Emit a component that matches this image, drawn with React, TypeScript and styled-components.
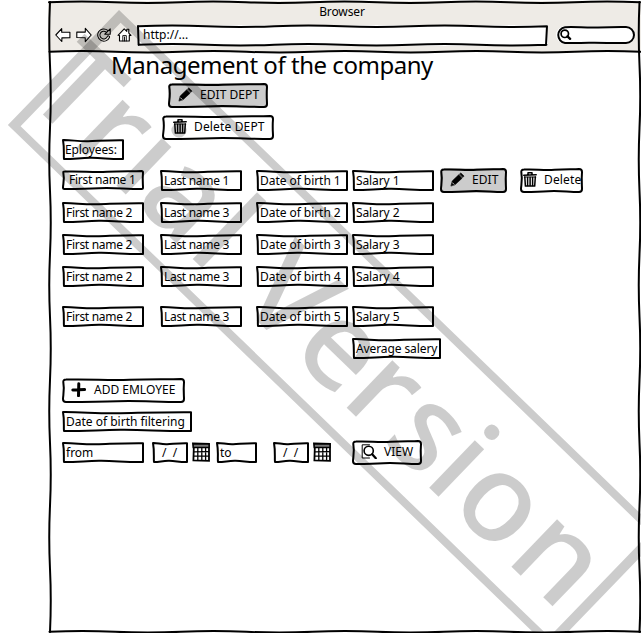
import React from "react";
import styled, { createGlobalStyle } from "styled-components";

const GlobalStyle = createGlobalStyle`
  *, *::before, *::after { box-sizing: border-box; }
  html, body { margin: 0; background: #fff; overflow: hidden; }
  body { font-family: "Noto Sans", "Open Sans", sans-serif; font-size: 12px; color: #000; }
  button { border: 0; padding: 0; font: inherit; color: inherit; text-align: left; }
`;

const Page = styled.div`
  position: relative;
  width: 641px;
  height: 633px;
  overflow: hidden;
  padding: 1px 0 0 48px;
`;

const Browser = styled.main`
  position: relative;
  width: 593px;
  height: 632px;
`;

const Outline = styled.svg`
  position: absolute;
  inset: 0;
  width: 100%;
  height: 100%;
  overflow: visible;
  pointer-events: none;
  fill: none;
  stroke: #000;
  stroke-width: 2;
  stroke-linejoin: round;
  stroke-linecap: round;
`;

const Chrome = styled.header`
  position: relative;
  height: 51px;
  padding: 1px 6px 0 7px;
  background: #eeebe6;
`;

const WindowTitle = styled.div`
  height: 20px;
  line-height: 20px;
  text-align: center;
  letter-spacing: -0.1px;
  padding-right: 6px;
`;

const Toolbar = styled.div`
  display: flex;
  align-items: center;
  height: 26px;
`;

const NavIcon = styled.svg<{ $gap: number }>`
  flex: none;
  margin-right: ${(p) => p.$gap}px;
  fill: none;
  stroke: #000;
  stroke-width: 1.1;
  stroke-linejoin: round;
  stroke-linecap: round;
`;

const Sheet = styled.section`
  display: flex;
  flex-direction: column;
  padding-left: 14px;
`;

const Heading = styled.h1`
  height: 31px;
  margin: 0 0 0 49px;
  font-size: 24px;
  font-weight: 400;
  line-height: 26px;
  letter-spacing: -0.47px;
  white-space: nowrap;
`;

const Row = styled.div<{ $h: number; $indent?: number }>`
  display: flex;
  align-items: flex-start;
  height: ${(p) => p.$h}px;
  padding-left: ${(p) => p.$indent ?? 0}px;
`;

const Box = styled.div<{
  $w: number;
  $h?: number;
  $gap?: number;
  $fill?: string;
  $pad?: number;
  $round?: number;
  $space?: number;
  $up?: number;
}>`
  position: relative;
  flex: none;
  display: flex;
  align-items: center;
  width: ${(p) => p.$w}px;
  height: ${(p) => p.$h ?? 21}px;
  margin-left: ${(p) => p.$gap ?? 0}px;
  margin-top: ${(p) => -(p.$up ?? 0)}px;
  padding-left: ${(p) => p.$pad ?? 4}px;
  background: ${(p) => p.$fill ?? "#fff"};
  border-radius: ${(p) => p.$round ?? 0}px;
  letter-spacing: ${(p) => p.$space ?? 0}px;
  line-height: 18px;
  white-space: nowrap;
`;

const Caption = styled.span<{ $lift?: number }>`
  padding-bottom: ${(p) => p.$lift ?? 0}px;
`;

const Glyph = styled.svg<{ $gap: number }>`
  flex: none;
  margin-right: ${(p) => p.$gap}px;
  margin-bottom: 2px;
  stroke: #000;
  stroke-linecap: round;
  stroke-linejoin: round;
  fill: none;
`;

const CalendarIcon = styled.svg`
  flex: none;
  margin-left: 4px;
  fill: none;
  stroke: #000;
`;

const Stamp = styled.div`
  position: absolute;
  left: 119px;
  top: 10px;
  width: 755px;
  height: 160px;
  transform-origin: 0 0;
  transform: rotate(44deg);
  border: solid rgba(0, 0, 0, 0.2);
  border-width: 8.5px 10.5px;
  color: rgba(0, 0, 0, 0.2);
  pointer-events: none;
`;

const StampText = styled.div`
  display: grid;
  grid-template-columns: 65px 55px 33px 73px 68px 76px 70px 57px 58px 35px 79px 80px;
  margin: -10px 0 0 -20px;
  font-size: 122px;
  font-weight: 500;
  line-height: 166px;
`;

function framePath(w: number, h: number, r: number) {
  const R = w - 1;
  const B = h - 1;
  if (r > 0) {
    return `M${r + 1} 1.6C${w * 0.25} ${0.8} ${w * 0.36} 2.8 ${w * 0.55} 1.8S${w * 0.85} 1.6 ${R - r} 1Q${R} 1 ${R} ${1 + r}C${R - 0.7} ${h * 0.5} ${R} ${h * 0.7} ${R} ${B - r}Q${R} ${B} ${R - r} ${B}C${w * 0.75} ${B - 0.2} ${w * 0.6} ${B - 1.6} ${w * 0.45} ${B - 0.8}S${w * 0.18} ${B} ${r + 1} ${B}Q1 ${B} 1 ${B - r}C1 ${h * 0.7} 2.8 ${h * 0.5} 1.3 ${r + 1}Q1 1.6 ${r + 1} 1.6Z`;
  }
  return `M1 1C${w * 0.16} 0.8 ${w * 0.25} 2.6 ${w * 0.42} 2.3S${w * 0.72} 1 ${R} 1.2L${R} ${B}C${w * 0.78} ${B + 0.4} ${w * 0.63} ${B - 1.5} ${w * 0.45} ${B - 1.2}S${w * 0.2} ${B} 2 ${B}C1.4 ${h * 0.72} 2.7 ${h * 0.5} 1 1Z`;
}

function wave(x: number, y: number, length: number, vertical: boolean) {
  let d = `M${x} ${y}`;
  const n = Math.round(length / 65);
  const step = length / n;
  for (let i = 0; i < n; i++) {
    const k = i % 2 ? 1 : -1;
    d += vertical
      ? `c${k} ${step / 3} ${k} ${(step * 2) / 3} 0 ${step}`
      : `c${step / 3} ${k} ${(step * 2) / 3} ${k} ${step} 0`;
  }
  return d;
}

function Frame({ w, h = 21, r = 0 }: { w: number; h?: number; r?: number }) {
  return (
    <Outline viewBox={`0 0 ${w} ${h}`}>
      <path d={framePath(w, h, r)} />
    </Outline>
  );
}

type FieldProps = { w: number; gap?: number; text: string; space?: number; pad?: number };

function Field({ w, gap, text, space = 0, pad = 4 }: FieldProps) {
  return (
    <Box $w={w} $gap={gap} $space={space} $pad={pad}>
      <Frame w={w} />
      <Caption>{text}</Caption>
    </Box>
  );
}

type ButtonProps = {
  w: number;
  gap?: number;
  up?: number;
  pad: number;
  fill?: string;
  space?: number;
  children: React.ReactNode;
};

function Button({ w, gap, up, pad, fill, space, children }: ButtonProps) {
  return (
    <Box as="button" $w={w} $h={25} $gap={gap} $up={up} $pad={pad} $fill={fill} $round={4} $space={space}>
      <Frame w={w} h={25} r={3} />
      {children}
    </Box>
  );
}

const Pencil = () => (
  <Glyph $gap={7} width="15" height="15" viewBox="0 0 15 15">
    <path d="M1 13.7 2.2 9 8.7 2.8l3.4 3.4L5.2 12.6Z" fill="#000" strokeWidth=".6" />
    <path d="M9.6 2 10.8 .9 14 4.1 12.9 5.3Z" fill="#000" strokeWidth=".6" />
    <path d="m2.5 10.8 1.4 1.4" stroke="#ccc" strokeWidth="1" />
  </Glyph>
);

const Trash = ({ gap }: { gap: number }) => (
  <Glyph $gap={gap} width="14" height="15" viewBox="0 0 14 15">
    <path d="M.7 3.3 13.2 2.7M5 2.6V.8h4v1.7" strokeWidth="1.5" />
    <path d="M1.4 5H12.7" strokeWidth="1.2" />
    <path d="m1.8 5 .6 9.1h9.3l.6-9.1" strokeWidth="1.5" />
    <path d="M4.6 5.5v8M7.1 5.5v8M9.6 5.5v8" strokeWidth="1.5" />
  </Glyph>
);

const Calendar = () => (
  <CalendarIcon width="18" height="20" viewBox="0 0 18 20">
    <path d="M1 1.5 17 1.8V18.8L1.4 18.4 1.8 6Z" fill="#fff" strokeWidth="1.8" />
    <path d="M1.2 2H17V5.5H1.2Z" fill="#777" strokeWidth="1.3" />
    <path d="M1.5 9.8 17 9.6M1.5 14.2H17M5.8 5v13.5M9.8 5v13.5M13.6 5v13.5" strokeWidth="1.3" />
  </CalendarIcon>
);

const employees = [
  { first: "First name 2", last: "Last name 3", n: 2, h: 32 },
  { first: "First name 2", last: "Last name 3", n: 3, h: 32 },
  { first: "First name 2", last: "Last name 3", n: 4, h: 40 },
  { first: "First name 2", last: "Last name 3", n: 5, h: 32 },
];

export default function App() {
  return (
    <Page>
      <GlobalStyle />
      <Browser>
        <Chrome>
          <WindowTitle>Browser</WindowTitle>
          <Toolbar>
            <NavIcon $gap={5} width="16" height="16" viewBox="0 0 16 16">
              <path d="M.8 8 6.7 1.7v3.6h8.2v5.4l-8 .2-.1 3.6Z" fill="#fff" />
            </NavIcon>
            <NavIcon $gap={5} width="16" height="16" viewBox="0 0 16 16">
              <path d="M15.2 8 9.3 1.3v3.8H.8v5.4l8.4.2.1 3.9Z" fill="#fff" />
            </NavIcon>
            <NavIcon $gap={5} width="15" height="16" viewBox="0 0 15 16">
              <path d="M11.4 10A5 5 0 1 1 10 4.2" strokeWidth="3.2" />
              <path d="M11.4 10A5 5 0 1 1 10 4.2" stroke="#eeebe6" strokeWidth="1.3" />
              <path d="M13.2 1.8v5.4H7.8Z" fill="#eeebe6" />
            </NavIcon>
            <NavIcon $gap={5} width="15" height="16" viewBox="0 0 15 16">
              <path d="m1 8.3 6.2-6.4 2.6 2.4V2.2h2v4L14 8.4h-1.7V14H2.5V8.5Z" fill="#fff" />
              <path d="M5.8 14V8.6h3.5V14M7.5 10v4" strokeWidth=".9" />
            </NavIcon>
            <Box $w={411} $h={21} $pad={6}>
              <Outline viewBox="0 0 411 21">
                <path d={`${wave(1, 1.2, 409, false)}${wave(1.5, 19.7, 408, false)}M1 1 1.6 20M410 1.2 409 20`} />
              </Outline>
              <Caption $lift={1}>http://...</Caption>
            </Box>
            <Box $w={79} $h={18} $gap={8} $pad={4} $round={9}>
              <Outline viewBox="0 0 79 18">
                <path d="M9 1.2C20 .4 29 2.1 42 1.5S60 1 70 1a8 8 0 0 1 0 16C57 17.3 45 16.5 33 16.8S19 17 9 17A8 8 0 0 1 9 1.2Z" />
              </Outline>
              <Glyph $gap={0} width="12" height="12" viewBox="0 0 12 12">
                <circle cx="4.8" cy="5.8" r="3.7" strokeWidth="1.7" />
                <path d="m7.5 8.4 2.6 2.4" strokeWidth="2.4" />
              </Glyph>
            </Box>
          </Toolbar>
        </Chrome>
        <Sheet>
          <Heading>Management of the company</Heading>
          <Row $h={32} $indent={106}>
            <Button w={100} pad={10} fill="#ccc" space={0.05}>
              <Pencil />
              <Caption $lift={1}>EDIT DEPT</Caption>
            </Button>
          </Row>
          <Row $h={24} $indent={100}>
            <Button w={112} pad={11} space={0.15}>
              <Trash gap={7} />
              <Caption $lift={1}>Delete DEPT</Caption>
            </Button>
          </Row>
          <Row $h={31}>
            <Field w={62} pad={3} text="Eployees:" space={-0.1} />
          </Row>
          <Row $h={32}>
            <Box $w={82} $h={20} $pad={7} $round={2} $space={-0.25}>
              <Frame w={82} h={20} r={1.5} />
              <Caption $lift={1}>First name 1</Caption>
            </Box>
            <Field w={82} gap={16} text="Last name 1" space={-0.3} />
            <Field w={92} gap={14} text="Date of birth 1" space={-0.05} />
            <Field w={82} gap={4} text="Salary 1" space={-0.1} />
            <Button w={67} gap={6} up={2} pad={10} fill="#ccc" space={0.05}>
              <Pencil />
              <Caption $lift={1}>EDIT</Caption>
            </Button>
            <Button w={63} gap={13} up={2} pad={3} space={0.15}>
              <Trash gap={7} />
              <Caption $lift={1}>Delete</Caption>
            </Button>
          </Row>
          {employees.map((e) => (
            <Row key={e.n} $h={e.h}>
              <Field w={82} text={e.first} space={-0.3} />
              <Field w={82} gap={16} text={e.last} space={-0.3} />
              <Field w={92} gap={14} text={`Date of birth ${e.n}`} space={-0.05} />
              <Field w={82} gap={4} text={`Salary ${e.n}`} space={-0.1} />
            </Row>
          ))}
          <Row $h={40} $indent={290}>
            <Field w={89} text="Average salery" space={-0.1} />
          </Row>
          <Row $h={33}>
            <Button w={123} pad={9} space={0}>
              <Glyph $gap={8} width="15" height="15" viewBox="0 0 15 15">
                <path d="M7.8 1.8 7.5 13.6M1.8 8 13.6 7.6" strokeWidth="3" />
              </Glyph>
              <Caption $lift={1}>ADD EMLOYEE</Caption>
            </Button>
          </Row>
          <Row $h={31}>
            <Field w={130} text="Date of birth filtering" />
          </Row>
          <Row $h={24}>
            <Field w={82} text="from" />
            <Field w={36} gap={8} pad={10} text={"/ \u00a0/"} />
            <Calendar />
            <Field w={41} gap={6} text="to" />
            <Field w={36} gap={16} pad={10} text={"/ \u00a0/"} />
            <Calendar />
            <Button w={70} gap={21} up={2} pad={9} space={0}>
              <Glyph $gap={7} width="16" height="15" viewBox="0 0 16 15">
                <path d="M8.5.8H1.2V14H8.5" strokeWidth="1" />
                <circle cx="7.7" cy="6.8" r="4.6" strokeWidth="1.6" />
                <path d="m11.2 10.2 3.6 4" strokeWidth="2.2" />
              </Glyph>
              <Caption $lift={1}>VIEW</Caption>
            </Button>
          </Row>
        </Sheet>
        <Outline viewBox="0 0 593 632">
          <path d={wave(1, 1.2, 591, false)} />
          <path d={wave(1.5, 50.8, 591, false)} />
          <path d={wave(1.5, 630.8, 591, false)} />
          <path d={wave(2, 1, 630, true)} />
          <path d={wave(591.5, 1, 630, true)} />
        </Outline>
      </Browser>
      <Stamp>
        <StampText>
          {"TrialVersion".split("").map((ch, i) => (
            <span key={i}>{ch}</span>
          ))}
        </StampText>
      </Stamp>
    </Page>
  );
}
